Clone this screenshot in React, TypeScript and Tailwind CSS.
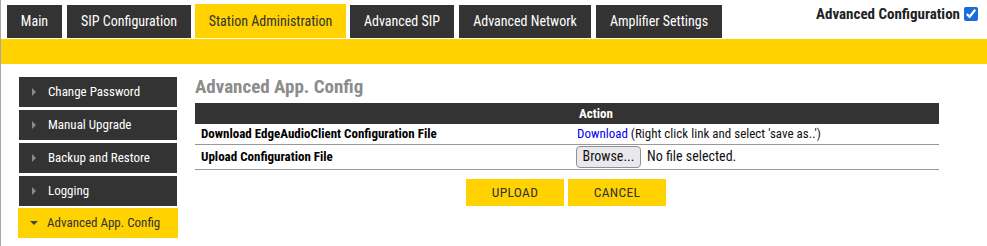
import React from "react";

const TABS = [
  { label: "Main", w: "w-[55px]", gap: "ml-0" },
  { label: "SIP Configuration", w: "w-[124px]", gap: "ml-[5px]" },
  { label: "Station Administration", w: "w-[151px]", gap: "ml-[4px]", active: true },
  { label: "Advanced SIP", w: "w-[104px]", gap: "ml-[4px]" },
  { label: "Advanced Network", w: "w-[132px]", gap: "ml-[5px]" },
  { label: "Amplifier Settings", w: "w-[126px]", gap: "ml-[5px]" },
];

const MENU = ["Change Password", "Manual Upgrade", "Backup and Restore", "Logging"];

const font = "font-['Roboto_Condensed','Liberation_Sans_Narrow',Roboto,Arial,sans-serif]";

export default function App() {
  return (
    <div className={`h-[246px] w-full border-l border-[#a8a8a8] bg-white ${font}`}>
      {/* top tabs */}
      <div className="flex h-[38px] items-end justify-between pl-[6px]">
        <div className="flex items-end">
          {TABS.map((t) =>
            t.active ? (
              <div
                key={t.label}
                className={`${t.gap} ${t.w} flex h-[34px] items-center justify-center bg-[#ffd200] text-[14px] text-[#333]`}
              >
                {t.label}
              </div>
            ) : (
              <div
                key={t.label}
                className={`${t.gap} ${t.w} flex h-[33px] items-center justify-center bg-[#333333] text-[14px] text-white`}
              >
                {t.label}
              </div>
            )
          )}
        </div>
        <label className="mb-auto mr-[9px] mt-[3px] flex items-center gap-[4px] text-[15px] font-bold text-[#222]">
          Advanced Configuration
          <input type="checkbox" defaultChecked className="h-[14px] w-[14px] accent-[#1a6ae0]" />
        </label>
      </div>
      <div className="mt-[1px] h-[25px] bg-[#ffd200]" />

      {/* body */}
      <div className="flex pl-[17px] pt-[13px]">
        <div className="flex w-[160px] flex-col">
          {MENU.map((m) => (
            <div
              key={m}
              className="mx-[1px] mb-[3px] flex h-[30px] items-center bg-[#333333] pl-[13px] text-[13px] text-white"
            >
              <span className="mr-[12px] h-0 w-0 border-y-[4px] border-l-[4px] border-y-transparent border-l-[#8a8a8a]" />
              {m}
            </div>
          ))}
          <div className="-mt-[1px] flex h-[30px] items-center bg-[#ffd200] pl-[12px] text-[13px] text-[#333]">
            <span className="mr-[9px] h-0 w-0 border-x-[4px] border-t-[4px] border-x-transparent border-t-[#444]" />
            Advanced App. Config
          </div>
        </div>

        <div className="ml-[17px] w-[744px]">
          <h2 className="-mt-[6px] h-[32px] text-[19px] font-bold leading-[32px] text-[#8c8c8c]">
            Advanced App. Config
          </h2>
          <table className="w-full border-collapse text-[13px]">
            <thead>
              <tr className="h-[21px] bg-[#333333] text-white">
                <th className="w-[378px]" />
                <th className="pl-[6px] text-left font-bold">Action</th>
              </tr>
            </thead>
            <tbody>
              <tr className="h-[20px] border-b border-[#999]">
                <td className="pl-[6px] font-bold text-black">Download EdgeAudioClient Configuration File</td>
                <td className="pl-[4px] text-[#111]">
                  <a href="#" className="text-[#0000ee]">Download</a> (Right click link and select 'save as..')
                </td>
              </tr>
              <tr className="h-[25px] border-b border-[#999]">
                <td className="pl-[6px] font-bold text-black">Upload Configuration File</td>
                <td className="pl-[3px]">
                  <div className="flex items-center">
                    <span className="flex h-[22px] w-[65px] items-center justify-center rounded-[4px] border border-[#8f8f9d] bg-[#e9e9ed] text-[14px] text-[#111]">
                      Browse...
                    </span>
                    <span className="ml-[6px] text-[14px] text-[#111]">No file selected.</span>
                  </div>
                </td>
              </tr>
            </tbody>
          </table>
          <div className="mt-[9px] flex justify-center gap-[4px] pr-[2px]">
            <button className="h-[27px] w-[98px] bg-[#ffd200] text-[13.5px] tracking-[0.3px] text-[#333]">
              UPLOAD
            </button>
            <button className="h-[27px] w-[98px] bg-[#ffd200] text-[13.5px] tracking-[0.3px] text-[#333]">
              CANCEL
            </button>
          </div>
        </div>
      </div>
    </div>
  );
}
